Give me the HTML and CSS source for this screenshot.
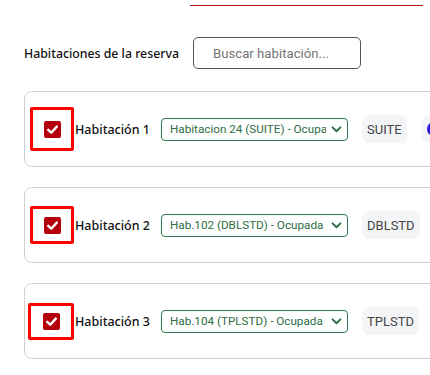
FILE: index.html
```html
<!DOCTYPE html>
<html lang="es">
<head>
<meta charset="utf-8">
<link rel="stylesheet" href="styles.css">
</head>
<body>
<div class="page">
  <div class="topline"></div>
  <div class="search-row">
    <div class="section-label">Habitaciones de la reserva</div>
    <div class="search-input">Buscar habitación...</div>
  </div>
  <div class="cards">
    <div class="card">
      <div class="mark mark--tall">
        <span class="check"><svg viewBox="0 0 17 17" width="17" height="17"><path d="M4.2 8.8 L7.2 11.7 L12.8 5.6" fill="none" stroke="#fff" stroke-width="2.4" stroke-linecap="round" stroke-linejoin="round"/></svg></span>
      </div>
      <div class="room-name">Habitación 1</div>
      <div class="select"><span class="select-text">Habitacion 24 (SUITE) - Ocupa</span><svg class="chev" viewBox="0 0 12 8" width="11" height="7"><path d="M1.5 1.5 L6 6 L10.5 1.5" fill="none" stroke="#2c7046" stroke-width="2.2" stroke-linecap="round" stroke-linejoin="round"/></svg></div>
      <div class="tag">SUITE</div>
      <div class="tag tag--dot"><span class="dot"></span></div>
    </div>
    <div class="card">
      <div class="mark">
        <span class="check"><svg viewBox="0 0 17 17" width="17" height="17"><path d="M4.2 8.8 L7.2 11.7 L12.8 5.6" fill="none" stroke="#fff" stroke-width="2.4" stroke-linecap="round" stroke-linejoin="round"/></svg></span>
      </div>
      <div class="room-name">Habitación 2</div>
      <div class="select"><span class="select-text">Hab.102 (DBLSTD) - Ocupada</span><svg class="chev" viewBox="0 0 12 8" width="11" height="7"><path d="M1.5 1.5 L6 6 L10.5 1.5" fill="none" stroke="#2c7046" stroke-width="2.2" stroke-linecap="round" stroke-linejoin="round"/></svg></div>
      <div class="tag">DBLSTD</div>
      <div class="tag tag--dot"><span class="dot"></span></div>
    </div>
    <div class="card">
      <div class="mark mark--wide">
        <span class="check"><svg viewBox="0 0 17 17" width="17" height="17"><path d="M4.2 8.8 L7.2 11.7 L12.8 5.6" fill="none" stroke="#fff" stroke-width="2.4" stroke-linecap="round" stroke-linejoin="round"/></svg></span>
      </div>
      <div class="room-name">Habitación 3</div>
      <div class="select"><span class="select-text">Hab.104 (TPLSTD) - Ocupada</span><svg class="chev" viewBox="0 0 12 8" width="11" height="7"><path d="M1.5 1.5 L6 6 L10.5 1.5" fill="none" stroke="#2c7046" stroke-width="2.2" stroke-linecap="round" stroke-linejoin="round"/></svg></div>
      <div class="tag">TPLSTD</div>
      <div class="tag tag--dot"><span class="dot"></span></div>
    </div>
  </div>
</div>
</body>
</html>
```

FILE: styles.css
```css
html, body {
  margin: 0;
  padding: 0;
  background: #fff;
  overflow: hidden;
}
body {
  width: 430px;
  height: 375px;
}
.page {
  padding-left: 24px;
  font-family: "Noto Sans", "Open Sans", sans-serif;
}
.topline {
  margin-left: 166px;
  margin-top: 5px;
  width: 233px;
  height: 1px;
  background: #b31515;
}
.search-row {
  display: flex;
  align-items: center;
  margin-top: 31px;
  height: 32px;
}
.section-label {
  flex: 0 0 169px;
  font-size: 12.3px;
  font-weight: 500;
  color: #111;
  white-space: nowrap;
}
.search-input {
  box-sizing: border-box;
  width: 168px;
  height: 32px;
  border: 1px solid #555;
  border-radius: 5px;
  padding-left: 19px;
  display: flex;
  align-items: center;
  font-family: Roboto, "Liberation Sans", sans-serif;
  font-size: 13.2px;
  color: #757575;
}
.cards {
  margin-top: 22px;
  display: flex;
  flex-direction: column;
  gap: 20px;
}
.card {
  box-sizing: border-box;
  width: 520px;
  height: 76px;
  border: 1px solid #cfcfcf;
  border-radius: 8px;
  padding-left: 5px;
  display: flex;
  align-items: center;
  flex-shrink: 0;
}
.mark {
  box-sizing: border-box;
  width: 44px;
  height: 38px;
  border: 3px solid #f00;
  border-radius: 2px;
  display: flex;
  align-items: center;
  justify-content: center;
  flex-shrink: 0;
}
.mark--tall {
  height: 44px;
}
.mark--wide {
  width: 46px;
  height: 37px;
  margin-left: -2px;
}
.check {
  width: 17px;
  height: 17px;
  background: #b3000c;
  border-radius: 2px;
  display: block;
}
.check svg {
  display: block;
}
.room-name {
  flex: 0 0 86px;
  margin-left: 1px;
  font-size: 12.5px;
  font-weight: 500;
  color: #111;
  white-space: nowrap;
}
.select {
  box-sizing: border-box;
  flex: 0 0 187px;
  height: 23px;
  border: 1px solid #2e7a4c;
  border-radius: 4px;
  padding-left: 8px;
  padding-right: 5px;
  display: flex;
  align-items: center;
  justify-content: space-between;
  font-family: Roboto, "Liberation Sans", sans-serif;
  font-size: 11.7px;
  color: #2c6e42;
  overflow: hidden;
}
.select-text {
  white-space: nowrap;
  overflow: hidden;
  flex: 1 1 auto;
}
.chev {
  flex-shrink: 0;
  margin-left: 5px;
}
.tag {
  margin-left: 14px;
  height: 28px;
  padding: 0 5px;
  background: #f4f5f6;
  border-radius: 7px;
  display: flex;
  align-items: center;
  font-family: Roboto, "Liberation Sans", sans-serif;
  font-size: 13px;
  color: #444;
  flex-shrink: 0;
}
.tag--dot {
  margin-left: 15px;
  padding: 0 5px;
}
.dot {
  width: 14px;
  height: 14px;
  border-radius: 50%;
  background: #2a14e8;
  display: block;
}
```
